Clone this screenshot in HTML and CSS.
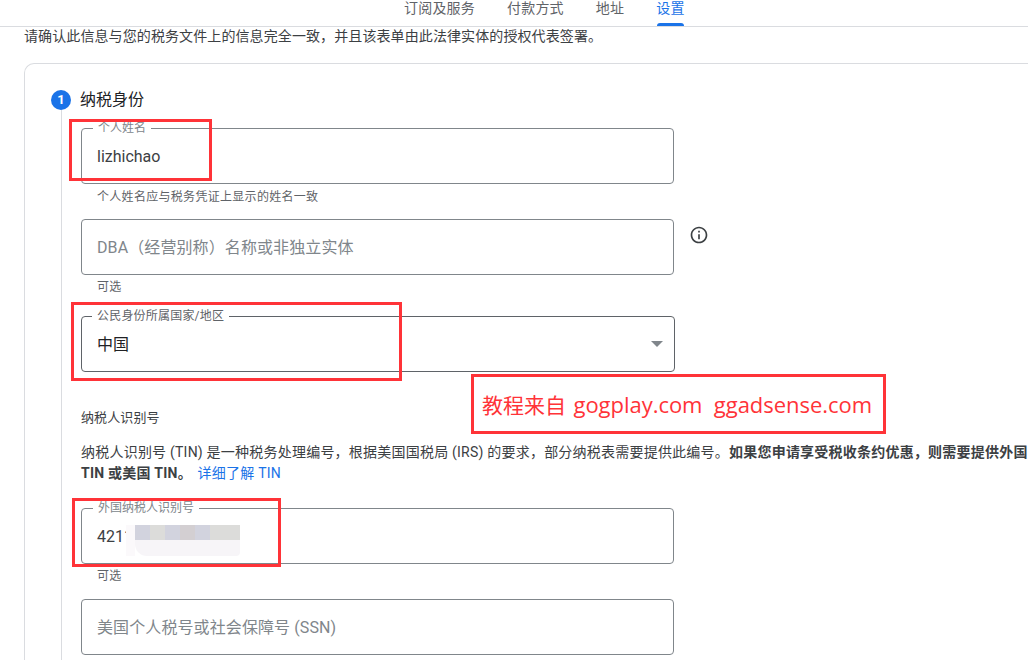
FILE: index.html
```html
<!DOCTYPE html>
<html lang="zh-CN">
<head>
<meta charset="utf-8">
<title>设置</title>
<link rel="stylesheet" href="styles.css">
</head>
<body>
<nav class="tabs">
  <a class="tab">订阅及服务</a>
  <a class="tab">付款方式</a>
  <a class="tab">地址</a>
  <a class="tab active">设置</a>
</nav>
<main class="content">
  <p class="intro">请确认此信息与您的税务文件上的信息完全一致，并且该表单由此法律实体的授权代表签署。</p>
  <section class="card">
    <h2 class="step-title"><span class="step-num">1</span>纳税身份</h2>
    <div class="step-body">
      <div class="field filled"><span class="legend">个人姓名</span><span class="value">lizhichao</span></div>
      <div class="helper h-name">个人姓名应与税务凭证上显示的姓名一致</div>
      <div class="row-info">
        <div class="field"><span class="placeholder">DBA（经营别称）名称或非独立实体</span></div>
        <svg class="info" viewBox="0 0 24 24" width="20" height="20"><path fill="#3c4043" d="M11 7h2v2h-2zm0 4h2v6h-2zm1-9C6.48 2 2 6.48 2 12s4.480 10 10 10 10-4.480 10-10S17.520 2 12 2zm0 18c-4.410 0-8-3.590-8-8s3.590-8 8-8 8 3.590 8 8-3.590 8-8 8z"/></svg>
      </div>
      <div class="helper h-opt">可选</div>
      <div class="field select"><span class="legend dark">公民身份所属国家/地区</span><span class="value black">中国</span><span class="arrow"></span></div>
      <h3 class="sub">纳税人识别号</h3>
      <p class="desc">纳税人识别号 (TIN) 是一种税务处理编号，根据美国国税局 (IRS) 的要求，部分纳税表需要提供此编号。<b>如果您申请享受税收条约优惠，则需要提供外国<br>TIN 或美国 TIN。</b> <a class="link">详细了解 TIN</a></p>
      <div class="field filled"><span class="legend">外国纳税人识别号</span><span class="value">4211</span>
        <span class="blur"><i class="c0"></i><i class="c1"></i><i class="c2"></i><i class="c1"></i><i class="c3"></i><i class="c1"></i><i class="c2"></i><i class="c2"></i></span>
        <span class="blur-low"></span>
      </div>
      <div class="helper h-opt2">可选</div>
      <div class="field"><span class="placeholder">美国个人税号或社会保障号 (SSN)</span></div>
    </div>
  </section>
</main>
<div class="mark m1"></div>
<div class="mark m2"></div>
<div class="mark m3"><span>教程来自 <span class="latin">gogplay.com&nbsp;&nbsp;ggadsense.com</span></span></div>
<div class="mark m4"></div>
</body>
</html>
```

FILE: styles.css
```css
* { box-sizing: border-box; }
html, body { margin: 0; height: 660px; overflow: hidden; background: #fff; }
body {
  position: relative;
  width: 1028px;
  font-family: Roboto, "Noto Sans CJK SC", sans-serif;
  color: #3c4043;
}
.tabs {
  height: 27px;
  border-bottom: 1px solid #dadce0;
  display: flex;
  gap: 32px;
  padding-left: 404px;
  align-items: flex-start;
}
.tab {
  font-size: 14px;
  letter-spacing: 0.2px;
  line-height: 16px;
  height: 26px;
  color: #5f6368;
  position: relative;
}
.tab.active { color: #1a73e8; }
.tab.active::after {
  content: "";
  position: absolute;
  left: 1px; right: 1px; bottom: 0;
  height: 3px;
  background: #1a73e8;
  border-radius: 3px 3px 0 0;
}
.content { padding-left: 24px; }
.intro {
  margin: 0;
  font-size: 14px;
  letter-spacing: 0.1px;
  line-height: 18px;
  height: 36px;
  color: #3c4043;
  white-space: nowrap;
}
.card {
  height: 597px;
  border: 1px solid #dadce0;
  border-right: 0;
  border-bottom: 0;
  border-top-left-radius: 10px;
  padding: 26px 0 0 26px;
  display: flex;
  flex-direction: column;
}
.step-title {
  margin: 0;
  display: flex;
  align-items: center;
  gap: 9px;
  font-size: 16px;
  font-weight: 400;
  line-height: 20px;
  color: #202124;
}
.step-num {
  width: 20px;
  height: 20px;
  border-radius: 50%;
  background: #1a73e8;
  color: #fff;
  font-size: 13px;
  font-weight: 700;
  line-height: 20px;
  text-align: center;
}
.step-body {
  flex: 1;
  margin: 0 0 0 10px;
  padding: 18px 0 0 19px;
  border-left: 1px solid #dadce0;
}
.field {
  position: relative;
  width: 593px;
  height: 56px;
  border: 1px solid #80868b;
  border-radius: 4px;
  display: flex;
  align-items: center;
  padding-left: 15px;
  font-size: 16px;
}
.legend {
  position: absolute;
  left: 11px;
  top: -8px;
  padding: 0 5px;
  background: #fff;
  font-size: 12px;
  line-height: 14px;
  color: #80868b;
}
.legend.dark { color: #5f6368; left: 10px; letter-spacing: 0.2px; }
.value { color: #3c4043; }
.value.black { color: #202124; margin-bottom: 3px; }
.placeholder { color: #80868b; margin-bottom: 3px; letter-spacing: 0.1px; }
.select { width: 594px; border-color: #5f6368; }
.arrow {
  position: absolute;
  right: 11px;
  top: 24px;
  border-left: 6px solid transparent;
  border-right: 6px solid transparent;
  border-top: 6px solid #80868b;
}
.helper {
  font-size: 12px;
  letter-spacing: 0.3px;
  line-height: 14px;
  color: #5f6368;
  padding-left: 16px;
}
.h-name { margin: 6px 0 15px; }
.h-opt { margin: 5px 0 22px; }
.h-opt2 { margin: 5px 0 16px; }
.row-info { display: flex; gap: 15px; align-items: flex-start; }
.info { margin-top: 6px; }
.sub {
  margin: 37px 0 0;
  font-size: 13px;
  letter-spacing: 0.1px;
  font-weight: 400;
  line-height: 18px;
  color: #3c4043;
}
.desc {
  margin: 15px 0 0;
  font-size: 14px;
  letter-spacing: 0.22px;
  line-height: 21px;
  height: 66px;
  white-space: nowrap;
  color: #3c4043;
}
.desc b { font-weight: 700; }
.link { color: #1a73e8; margin-left: 2px; }
.blur {
  position: absolute;
  left: 44px;
  top: 16px;
  display: flex;
}
.blur i { display: block; width: 15px; height: 15px; }
.blur .c0 { background: #fbf9fb; width: 9px; height: 31px; }
.blur .c1 { background: #d2d3de; }
.blur .c2 { background: #dcdcda; }
.blur .c3 { background: #d3cfd2; }
.blur-low {
  position: absolute;
  left: 53px;
  top: 31px;
  width: 105px;
  height: 16px;
  background: #f7f5f8;
  border-radius: 0 0 4px 12px;
}
.mark {
  position: absolute;
  border: 3px solid #ff3338;
}
.m1 { left: 69px; top: 119px; width: 143px; height: 62px; }
.m2 { left: 71px; top: 302px; width: 331px; height: 79px; }
.m3 {
  left: 471px; top: 374px; width: 415px; height: 60px;
  display: flex; align-items: center; padding-left: 8px;
  color: #ff3338; font-size: 21px; white-space: nowrap;
  font-family: "Open Sans", "Noto Sans CJK SC", sans-serif;
}
.latin { font-size: 22px; margin-left: 2px; letter-spacing: -0.03px; }
.m4 { left: 72px; top: 498px; width: 209px; height: 69px; }
```
